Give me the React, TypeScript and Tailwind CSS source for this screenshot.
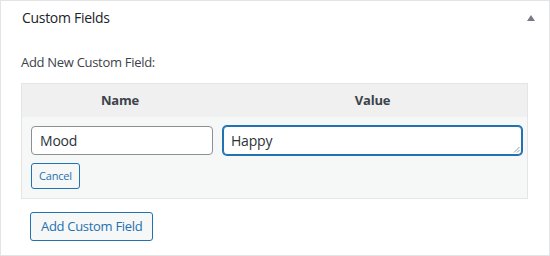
const font = { fontFamily: '"Open Sans", "Noto Sans", sans-serif' };

export default function App() {
  return (
    <div
      className="w-[550px] h-[256px] bg-white border border-[#e2e4e7] flex flex-col text-[#1d2327]"
      style={font}
    >
      {/* box header */}
      <div className="flex items-center justify-between h-[33px] pl-[21px] pr-[14px]">
        <h2 className="text-[14px] tracking-[-0.3px] text-[#1d2327]">Custom Fields</h2>
        <span className="w-0 h-0 border-l-[4px] border-r-[4px] border-b-[6px] border-l-transparent border-r-transparent border-b-[#787c82]" />
      </div>

      <div className="flex flex-col pl-[20px] pr-[21px]">
        <p className="mt-[18px] text-[13px] tracking-[-0.3px] text-[#3c434a] leading-[20px]">
          Add New Custom Field:
        </p>

        {/* custom field table */}
        <div className="mt-[11px] w-[507px] border border-[#e4e5e7] bg-[#f6f7f7]">
          <div className="flex h-[33px] bg-[#f0f0f1] items-center text-[13px] font-bold text-[#3c434a] tracking-[-0.2px]">
            <div className="w-[196px] text-center">Name</div>
            <div className="flex-1 text-center">Value</div>
          </div>
          <div className="flex pt-[9px] pb-[9px]">
            <div className="w-[196px] pl-[9px] pr-[4px] flex flex-col items-start">
              <div className="w-[182px] h-[29px] rounded-[4px] border border-[#8c8f94] bg-white flex items-center px-[8px] text-[14px] text-[#2c3338] tracking-[-0.2px]">
                Mood
              </div>
              <button className="mt-[8px] h-[26px] px-[7px] rounded-[3px] border border-[#2271b1] bg-[#f6f7f7] text-[11px] text-[#2271b1] tracking-[-0.2px]">
                Cancel
              </button>
            </div>
            <div className="flex-1 pl-[5px] pr-[5px]">
              <div className="relative h-[29px] rounded-[4px] border border-[#2271b1] shadow-[0_0_0_1px_#2271b1] bg-white flex items-center px-[7px] text-[14px] text-[#2c3338] tracking-[-0.2px]">
                Happy
                <svg className="absolute right-[1px] bottom-[1px]" width="7" height="7" viewBox="0 0 7 7">
                  <path d="M6.5 1 L1 6.5 M6.5 4 L4 6.5" stroke="#9a9a9a" strokeWidth="1" />
                </svg>
              </div>
            </div>
          </div>
        </div>

        <button className="mt-[13px] ml-[9px] self-start h-[29px] px-[10px] rounded-[3px] border border-[#2271b1] bg-[#f6f7f7] text-[13px] text-[#2271b1] tracking-[-0.3px]">
          Add Custom Field
        </button>
      </div>
    </div>
  );
}
